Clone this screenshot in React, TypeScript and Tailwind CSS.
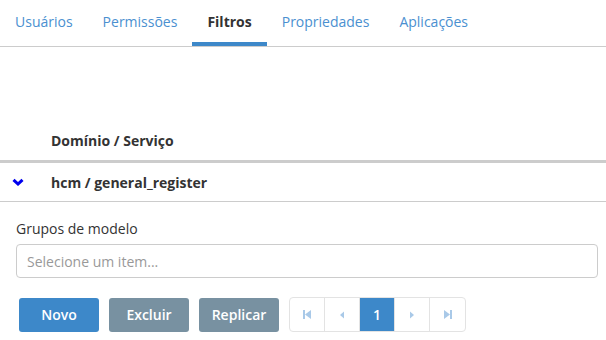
import React from "react";

const font = { fontFamily: '"Open Sans", "Noto Sans", sans-serif' };

function Tab({ label, active }: { label: string; active?: boolean }) {
  return (
    <div
      className={
        "px-[15px] pt-[12px] h-[46px] text-[14px] leading-[20px] " +
        (active
          ? "font-bold text-[#333333] border-b-4 border-[#3d88c9]"
          : "text-[#4a90d0]")
      }
    >
      {label}
    </div>
  );
}

function PageCell({ children, active, last }: { children: React.ReactNode; active?: boolean; last?: boolean }) {
  return (
    <div
      className={
        "w-[35px] h-full flex items-center justify-center " +
        (last ? "" : "border-r border-[#e3e3e3] ") +
        (active ? "bg-[#3d88c9] text-white font-semibold text-[14px]" : "text-[#a9c9e8]")
      }
    >
      {children}
    </div>
  );
}

export default function App() {
  return (
    <div className="w-[606px] h-[340px] bg-white overflow-hidden" style={font}>
      <div className="flex border-b border-[#cccccc] h-[47px]">
        <Tab label="Usuários" />
        <Tab label="Permissões" />
        <Tab label="Filtros" active />
        <Tab label="Propriedades" />
        <Tab label="Aplicações" />
      </div>
      <div className="h-[74px]" />
      <div className="h-[39px] flex items-center pl-[51px] text-[14px] font-bold text-[#333333]">
        Domínio / Serviço
      </div>
      <div className="h-[3px] bg-[#cccccc]" />
      <div className="h-[39px] flex items-center border-b border-[#cccccc] text-[14px] font-bold text-[#333333]">
        <div className="w-[51px] pl-[12px] flex items-center">
          <svg width="12" height="8" viewBox="0 0 12 8">
            <path d="M1.5 1.8 L6 6 L10.5 1.8" fill="none" stroke="#0000ee" strokeWidth="3" />
          </svg>
        </div>
        hcm / general_register
      </div>
      <div className="pl-[16px] pr-[8px] pt-[17px]">
        <div className="text-[14px] leading-[20px] text-[#333333]">Grupos de modelo</div>
        <div className="mt-[5px] h-[34px] border border-[#cccccc] rounded-[4px] flex items-center px-[10px] text-[14px] text-[#999999]">
          Selecione um item...
        </div>
        <div className="flex items-center mt-[19px] pl-[3px] gap-[10px]">
          <button className="w-[80px] h-[34px] rounded-[3px] bg-[#3d88c9] text-white text-[14px] font-semibold">Novo</button>
          <button className="w-[80px] h-[34px] rounded-[3px] bg-[#7891a1] text-white text-[14px] font-semibold">Excluir</button>
          <button className="w-[80px] h-[34px] rounded-[3px] bg-[#7891a1] text-white text-[14px] font-semibold">Replicar</button>
          <div className="h-[35px] flex border border-[#e3e3e3] rounded-[4px] overflow-hidden">
            <PageCell>
              <svg width="10" height="11" viewBox="0 0 10 11"><rect x="1" y="1" width="2" height="9" fill="currentColor" /><path d="M9 1 L3 5.5 L9 10 Z" fill="currentColor" /></svg>
            </PageCell>
            <PageCell>
              <svg width="6" height="10" viewBox="0 0 6 10"><path d="M5 1.5 L1 5 L5 8.5 Z" fill="currentColor" /></svg>
            </PageCell>
            <PageCell active>1</PageCell>
            <PageCell>
              <svg width="6" height="10" viewBox="0 0 6 10"><path d="M1 1.5 L5 5 L1 8.5 Z" fill="currentColor" /></svg>
            </PageCell>
            <PageCell last>
              <svg width="10" height="11" viewBox="0 0 10 11"><rect x="7" y="1" width="2" height="9" fill="currentColor" /><path d="M1 1 L7 5.5 L1 10 Z" fill="currentColor" /></svg>
            </PageCell>
          </div>
        </div>
      </div>
    </div>
  );
}
